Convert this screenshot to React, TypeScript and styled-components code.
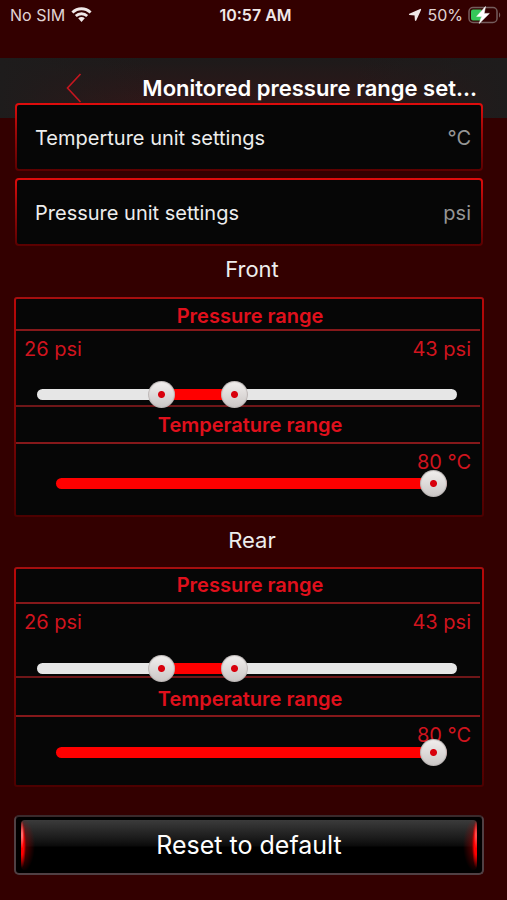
import React, { useState } from "react";
import styled, { createGlobalStyle } from "styled-components";

const GlobalStyle = createGlobalStyle`
  *, *::before, *::after { box-sizing: border-box; }
  body {
    margin: 0;
    background: #330000;
    color: #ededed;
    font-family: Inter, "Liberation Sans", sans-serif;
  }
  button { font: inherit; color: inherit; border: 0; margin: 0; cursor: pointer; }
`;

const Page = styled.div`
  min-height: 100vh;
  display: flex;
  flex-direction: column;
  background: #330000;
`;

const StatusBar = styled.div`
  display: grid;
  grid-template-columns: 1fr auto 1fr;
  align-items: center;
  height: 58px;
  padding: 0 6px 28px 10px;
  font-size: 16px;
  line-height: 20px;
  color: #e0d4d4;
`;

const StatusGroup = styled.div<{ $end?: boolean }>`
  display: flex;
  align-items: center;
  gap: ${(p) => (p.$end ? 5 : 6)}px;
  justify-content: ${(p) => (p.$end ? "flex-end" : "flex-start")};
  svg { flex: none; }
`;

const Clock = styled.time`
  font-weight: 600;
  color: #f0e8e8;
`;

const Header = styled.header`
  display: flex;
  align-items: center;
  height: 60px;
  padding: 0 30px 0 60px;
  background: linear-gradient(90deg, #1e1c1c, #1e1c1c00 30%, #1e1c1c00 70%, #1e1c1c),
    linear-gradient(#1d1a1a, #301718 75%, #2c1718);
`;

const BackButton = styled.button`
  display: flex;
  justify-content: center;
  width: 28px;
  padding: 0;
  background: none;
`;

const Title = styled.h1`
  flex: 1;
  min-width: 0;
  margin: 0;
  overflow: hidden;
  white-space: nowrap;
  text-align: right;
  font-size: 22px;
  line-height: 28px;
  font-weight: 600;
  color: #ffffff;
`;

const Content = styled.main`
  position: relative;
  display: flex;
  flex-direction: column;
  margin-top: -15px;
  padding: 0 23px 25px 14px;
`;

const UnitList = styled.div`
  display: flex;
  flex-direction: column;
  gap: 7px;
  padding: 0 1px;
`;

const UnitRow = styled.button`
  display: flex;
  align-items: center;
  justify-content: space-between;
  height: 68px;
  padding: 2px 10px 0 18px;
  border: 2px solid transparent;
  border-radius: 4px;
  background: linear-gradient(#060606, #060606) padding-box,
    linear-gradient(#e00c0c, #a00808 40%, #5a0000) border-box;
  font-size: 20px;
  line-height: 24px;
  text-align: left;
`;

const UnitValue = styled.span`
  color: #969696;
`;

const AxleTitle = styled.h2<{ $height: number }>`
  display: flex;
  align-items: center;
  justify-content: center;
  height: ${(p) => p.$height}px;
  margin: 0;
  padding: 0 0 5px 6px;
  font-size: 22px;
  line-height: 28px;
  font-weight: 400;
`;

const Panel = styled.section`
  display: flex;
  flex-direction: column;
  height: 220px;
  border: 2px solid transparent;
  border-radius: 3px;
  background: linear-gradient(#060606, #060606) padding-box,
    linear-gradient(#a01010, #b80808 2%, #900606 40%, #4c0000) border-box;
`;

const RangeTitle = styled.h3<{ $height: number; $top: number }>`
  height: ${(p) => p.$height}px;
  margin: 0 2px 0 0;
  padding: ${(p) => p.$top}px 0 0 4px;
  border-bottom: 2px solid #85181a;
  font-size: 20px;
  line-height: 24px;
  font-weight: 600;
  text-align: center;
  color: #e0101c;
`;

const PressureArea = styled.div<{ $height: number }>`
  height: ${(p) => p.$height}px;
  margin-right: 2px;
  padding-top: 6px;
  border-bottom: 2px solid #6e1618;
`;

const TemperatureArea = styled.div`
  flex: 1;
  margin-right: 2px;
  padding-top: 6px;
`;

const Readings = styled.div<{ $end?: boolean }>`
  display: flex;
  justify-content: ${(p) => (p.$end ? "flex-end" : "space-between")};
  padding: 0 9px 0 8px;
  font-size: 20px;
  line-height: 24px;
  color: #d0141e;
`;

const DualSlider = styled.div<{ $gap: number }>`
  position: relative;
  display: flex;
  align-items: center;
  height: 28px;
  margin: ${(p) => p.$gap}px 23px 0 21px;
`;

const Track = styled.div`
  flex: 1;
  height: 11px;
  border-radius: 6px;
  background: #e6e6e6;
`;

const SliderInput = styled.input<{ $overlay?: boolean; $lift?: number }>`
  appearance: none;
  height: 28px;
  background: transparent;
  ${(p) =>
    p.$overlay
      ? "position: absolute; inset: 0; width: 100%; margin: 0; pointer-events: none;"
      : `position: relative; display: block; width: calc(100% - 73px); margin: -${p.$lift}px 33px 0 40px;`}

  &::-webkit-slider-runnable-track {
    height: 11px;
    border-radius: 6px;
    background: ${(p) => (p.$overlay ? "transparent" : "#ff0000")};
  }

  &::-webkit-slider-thumb {
    appearance: none;
    pointer-events: auto;
    width: 27px;
    height: 27px;
    margin-top: -8px;
    border-radius: 50%;
    background: radial-gradient(circle, #d8000c 3px, transparent 4px),
      linear-gradient(#f2efee, #cac6c5);
    box-shadow: inset 0 0 1px 1px #b9b3b2;
  }
`;

const ResetButton = styled.button`
  display: flex;
  height: 60px;
  margin-top: 28px;
  padding: 3px 5px;
  border: 2px solid #504044;
  border-top-color: #3a2a2c;
  border-radius: 5px;
  background: #000000;
`;

const ResetFace = styled.span`
  flex: 1;
  display: flex;
  align-items: center;
  justify-content: center;
  align-self: stretch;
  border-radius: 4px;
  background:
    radial-gradient(ellipse 2px 14px at 1px 30%, #ff9090, #ff909000) left / 14px 100% no-repeat,
    radial-gradient(ellipse 4px 24px at 1px 48%, #ff0000 45%, #ff000000) left / 14px 100% no-repeat,
    radial-gradient(ellipse 14px 28px at 0 50%, #b00000b0, #b0000000) left / 14px 100% no-repeat,
    radial-gradient(ellipse 2px 14px at 13px 30%, #ff6060, #ff606000) right / 14px 100% no-repeat,
    radial-gradient(ellipse 4px 24px at 13px 48%, #ff0000 45%, #ff000000) right / 14px 100% no-repeat,
    radial-gradient(ellipse 14px 28px at 14px 50%, #b00000b0, #b0000000) right / 14px 100% no-repeat,
    linear-gradient(#3b3b3b, #1c1c1c 35%, #0a0a0a 52%, #000000 54%);
  font-size: 25px;
  line-height: 28px;
  color: #ffffff;
`;

const WifiIcon = () => (
  <svg width="21" height="16" viewBox="0 0 21 16" aria-hidden="true">
    <g fill="none" stroke="#f0e8e8" strokeWidth="2.8">
      <path d="M1.4 5.5C6.6.5 14.4.5 19.6 5.5" />
      <path d="M4.8 9C8 6 13 6 16.2 9" />
    </g>
    <path fill="#f0e8e8" d="M7.2 11.2c1.9-1.7 4.7-1.7 6.6 0L10.5 15z" />
  </svg>
);

const LocationIcon = () => (
  <svg width="14" height="14" viewBox="0 0 14 14" aria-hidden="true">
    <path
      fill="#f0e8e8"
      stroke="#f0e8e8"
      strokeWidth="1.4"
      strokeLinejoin="round"
      d="M12.4 1.6 7.6 12.2 7.2 6.8 1.6 6.4z"
    />
  </svg>
);

const BatteryIcon = () => (
  <svg width="33" height="18" viewBox="0 0 33 18" aria-hidden="true">
    <rect x="1" y="1.5" width="28" height="15" rx="4" fill="none" stroke="#755c5c" strokeWidth="1.5" />
    <path d="M31 6.5c1.6.6 1.6 4.4 0 5z" fill="#755c5c" />
    <path d="M5 3.5h8.5v11H5a2 2 0 0 1-2-2v-7a2 2 0 0 1 2-2z" fill="#35c759" />
    <path d="M17.5.5 8.6 10.4h5L11.2 17.5 21.4 7.4h-5.2z" fill="#ffffff" stroke="#ffffff" strokeWidth=".5" />
  </svg>
);

const BackIcon = () => (
  <svg width="16" height="30" viewBox="0 0 16 30" aria-hidden="true">
    <path d="M14.5 1 1.5 15l13 14" fill="none" stroke="#c5161f" strokeWidth="1.6" />
  </svg>
);

type Spacing = {
  name: number;
  firstTitle: number;
  firstTop: number;
  pressure: number;
  gap: number;
  secondTitle: number;
  secondTop: number;
  lift: number;
};

const FRONT: Spacing = {
  name: 51, firstTitle: 32, firstTop: 5, pressure: 76, gap: 19, secondTitle: 37, secondTop: 6, lift: 5,
};
const REAR: Spacing = {
  name: 50, firstTitle: 35, firstTop: 4, pressure: 74, gap: 20, secondTitle: 39, secondTop: 9, lift: 9,
};

const MAX_PSI = 92;
const THUMB = 27;
const DEFAULTS = { low: 26, high: 43, temperature: 80 };
type Limits = typeof DEFAULTS;

const thumbCentre = (value: number) => {
  const share = value / MAX_PSI;
  return `calc(${THUMB / 2 - share * THUMB}px + ${share * 100}%)`;
};

type AxleProps = {
  name: string;
  spacing: Spacing;
  limits: Limits;
  onChange: (limits: Limits) => void;
};

const Axle = ({ name, spacing, limits, onChange }: AxleProps) => {
  const { low, high, temperature } = limits;
  const from = thumbCentre(low);
  const to = thumbCentre(high);
  return (
    <>
      <AxleTitle $height={spacing.name}>{name}</AxleTitle>
      <Panel aria-label={name}>
        <RangeTitle $height={spacing.firstTitle} $top={spacing.firstTop}>Pressure range</RangeTitle>
        <PressureArea $height={spacing.pressure}>
          <Readings>
            <output>{low} psi</output>
            <output>{high} psi</output>
          </Readings>
          <DualSlider $gap={spacing.gap}>
            <Track
              style={{
                backgroundImage: `linear-gradient(90deg, transparent ${from}, #ff0000 ${from}, #ff0000 ${to}, transparent ${to})`,
              }}
            />
            <SliderInput
              $overlay
              type="range"
              aria-label={`${name} lowest pressure`}
              min={0}
              max={MAX_PSI}
              value={low}
              onChange={(e) => onChange({ ...limits, low: Math.min(Number(e.target.value), high) })}
            />
            <SliderInput
              $overlay
              type="range"
              aria-label={`${name} highest pressure`}
              min={0}
              max={MAX_PSI}
              value={high}
              onChange={(e) => onChange({ ...limits, high: Math.max(Number(e.target.value), low) })}
            />
          </DualSlider>
        </PressureArea>
        <RangeTitle $height={spacing.secondTitle} $top={spacing.secondTop}>Temperature range</RangeTitle>
        <TemperatureArea>
          <Readings $end>
            <output>{temperature} °C</output>
          </Readings>
          <SliderInput
            $lift={spacing.lift}
            type="range"
            aria-label={`${name} highest temperature`}
            min={0}
            max={80}
            value={temperature}
            onChange={(e) => onChange({ ...limits, temperature: Number(e.target.value) })}
          />
        </TemperatureArea>
      </Panel>
    </>
  );
};

export default function App() {
  const [front, setFront] = useState<Limits>(DEFAULTS);
  const [rear, setRear] = useState<Limits>(DEFAULTS);

  const reset = () => {
    setFront(DEFAULTS);
    setRear(DEFAULTS);
  };

  return (
    <Page>
      <GlobalStyle />
      <StatusBar>
        <StatusGroup>
          <span>No SIM</span>
          <WifiIcon />
        </StatusGroup>
        <Clock>10:57 AM</Clock>
        <StatusGroup $end>
          <LocationIcon />
          <span>50%</span>
          <BatteryIcon />
        </StatusGroup>
      </StatusBar>
      <Header>
        <BackButton type="button" aria-label="Back">
          <BackIcon />
        </BackButton>
        <Title>Monitored pressure range set...</Title>
      </Header>
      <Content>
        <UnitList>
          <UnitRow type="button">
            <span>Temperture unit settings</span>
            <UnitValue>°C</UnitValue>
          </UnitRow>
          <UnitRow type="button">
            <span>Pressure unit settings</span>
            <UnitValue>psi</UnitValue>
          </UnitRow>
        </UnitList>
        <Axle name="Front" spacing={FRONT} limits={front} onChange={setFront} />
        <Axle name="Rear" spacing={REAR} limits={rear} onChange={setRear} />
        <ResetButton type="button" onClick={reset}>
          <ResetFace>Reset to default</ResetFace>
        </ResetButton>
      </Content>
    </Page>
  );
}
